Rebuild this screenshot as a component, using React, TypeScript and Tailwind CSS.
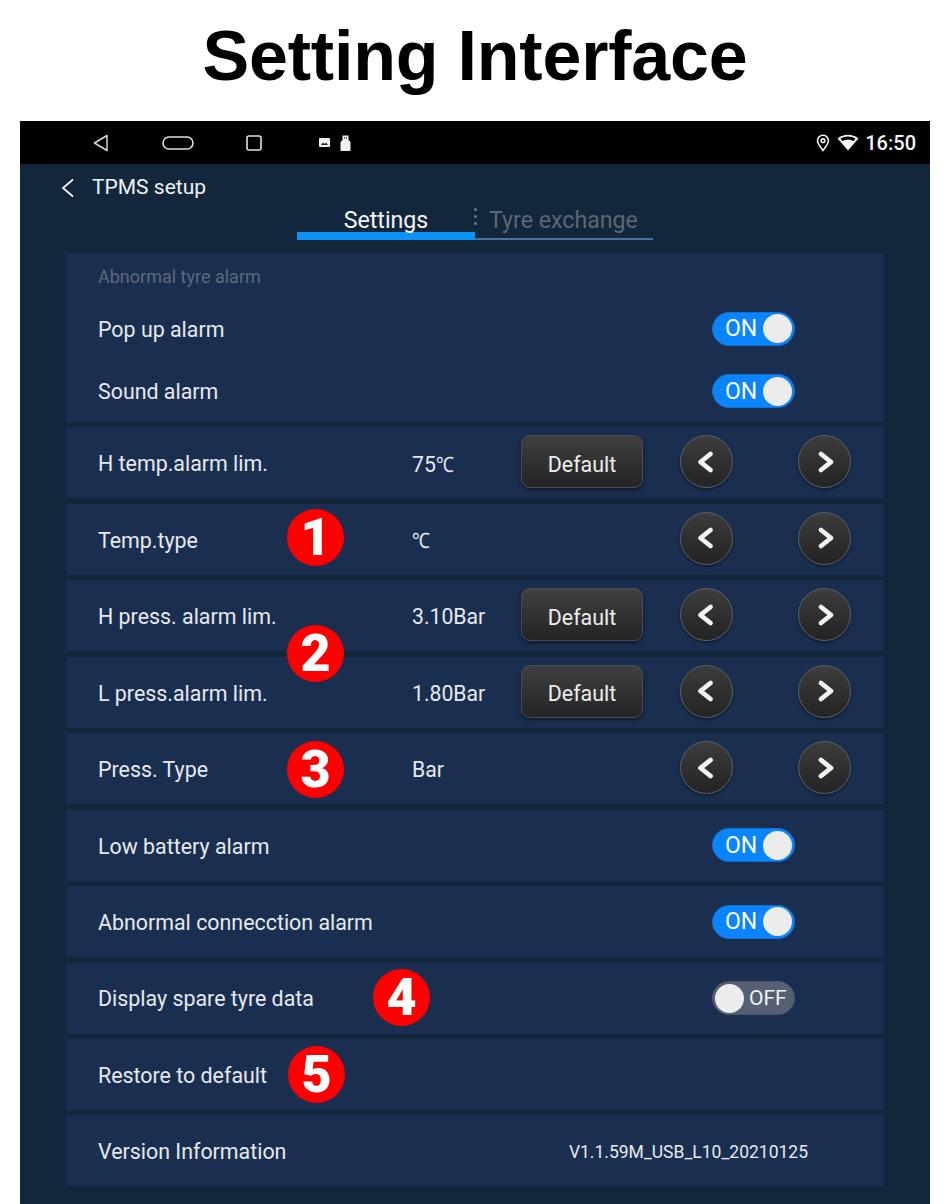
import React from "react";

const roboto = "font-['Roboto',sans-serif]";

function Toggle({ on = true }: { on?: boolean }) {
  if (!on) {
    return (
      <div className="ml-auto mr-[89px] -mt-[3px] flex h-[34px] w-[83px] shrink-0 items-center rounded-full border border-[#4a5468] bg-[#566072] pl-[2px]">
        <div className="h-[29px] w-[29px] rounded-full bg-[#ececec]" />
        <span className="ml-[5px] text-[21px] leading-none text-[#eef1f4]">OFF</span>
      </div>
    );
  }
  return (
    <div className="ml-auto mr-[89px] -mt-[3px] flex h-[34px] w-[83px] shrink-0 items-center rounded-full border border-[#1170c8] bg-[#0a84ff] pl-[12px] pr-[2px]">
      <span className="text-[23px] leading-none text-white">ON</span>
      <div className="ml-auto h-[29px] w-[29px] rounded-full bg-[#ececec]" />
    </div>
  );
}

function Arrow({ dir }: { dir: "left" | "right" }) {
  return (
    <button className="flex h-[53px] w-[53px] shrink-0 items-center justify-center rounded-full border border-[#5d6167] bg-gradient-to-b from-[#3d3d3d] to-[#232323] shadow-[0_2px_3px_rgba(0,0,0,0.4)]">
      <svg width="20" height="24" viewBox="0 0 20 24" fill="none" stroke="#f2f2f2" strokeWidth="4.8" strokeLinecap="round" strokeLinejoin="round">
        {dir === "left" ? <path d="M13.5 4 L3.5 12 L13.5 20" /> : <path d="M6 4 L16 12 L6 20" />}
      </svg>
    </button>
  );
}

function Stepper() {
  return (
    <div className="-mt-[5px] flex items-center">
      <div className="w-[37px]" />
      <Arrow dir="left" />
      <div className="w-[65px]" />
      <Arrow dir="right" />
    </div>
  );
}

function DefaultButton() {
  return (
    <button className="-mt-[5px] flex h-[53px] w-[122px] shrink-0 items-center justify-center rounded-[9px] border border-[#4a4c4f] bg-gradient-to-b from-[#404040] to-[#242424] pt-[5px] text-[21.4px] leading-none text-[#eeeeee] shadow-[0_2px_4px_rgba(0,0,0,0.5)]">
      Default
    </button>
  );
}

function Row({ children }: { children: React.ReactNode }) {
  return (
    <div className="flex h-[71px] items-center bg-[#1a2f50] pl-[32px] pt-[3px] text-[21.4px] text-[#e6e9ed]">{children}</div>
  );
}

function ValueRow({ label, value, hasDefault }: { label: string; value: React.ReactNode; hasDefault?: boolean }) {
  return (
    <Row>
      <span className="w-[314px] shrink-0">{label}</span>
      <span className="w-[109px] shrink-0 text-[21.2px]">{value}</span>
      {hasDefault ? <DefaultButton /> : <div className="w-[122px] shrink-0" />}
      <Stepper />
    </Row>
  );
}

function Celsius() {
  return <span className="inline-block origin-left scale-x-[0.85]">℃</span>;
}

function Badge({ n, className }: { n: string; className: string }) {
  return (
    <div className={`absolute flex h-[57px] w-[57px] items-center justify-center rounded-full bg-[#fe0000] text-[52px] leading-none font-black text-white ${className}`}>
      {n}
    </div>
  );
}

export default function App() {
  return (
    <div className={`relative h-[1204px] w-[950px] overflow-hidden bg-white ${roboto}`}>
      <div className="flex h-[121px] items-start justify-center pt-[16px]">
        <h1 className="font-['Liberation_Sans',sans-serif] text-[70px] leading-[80px] font-bold tracking-[-0.2px] text-black">Setting Interface</h1>
      </div>

      <div className="mx-[20px] h-[1083px] bg-[#12263c]">
        {/* Status bar */}
        <div className="flex h-[43px] items-center bg-black pl-[73px] pr-[14px] text-white">
          <svg width="16" height="18" viewBox="0 0 16 18" fill="none" stroke="#d8d8d8" strokeWidth="1.5" strokeLinejoin="round">
            <path d="M14 1.5 L1.5 9 L14 16.5 Z" />
          </svg>
          <svg className="ml-[53px]" width="32" height="14" viewBox="0 0 32 14" fill="none" stroke="#e0e0e0" strokeWidth="1.6">
            <rect x="1" y="1" width="30" height="12" rx="6" />
          </svg>
          <svg className="ml-[52px]" width="16" height="16" viewBox="0 0 16 16" fill="none" stroke="#e0e0e0" strokeWidth="1.6">
            <rect x="1" y="1" width="14" height="14" rx="2" />
          </svg>
          <svg className="ml-[57px]" width="11" height="9" viewBox="0 0 11 9">
            <rect width="11" height="9" rx="1" fill="#eeeeee" />
            <path d="M2 7 L4 4.5 L5.5 6 L7 4.5 L9 7 Z" fill="#222222" />
          </svg>
          <svg className="ml-[10px]" width="11" height="16" viewBox="0 0 11 16">
            <path d="M2.5 0.5 H8.5 V5 L10.5 7 V15 a1 1 0 0 1 -1 1 H1.5 a1 1 0 0 1 -1 -1 V7 L2.5 5 Z" fill="#f0f0f0" />
            <rect x="4" y="2" width="1" height="1.5" fill="#333333" />
            <rect x="6" y="2" width="1" height="1.5" fill="#333333" />
          </svg>
          <svg className="ml-auto" width="14" height="18" viewBox="0 0 14 18" fill="none" stroke="#f2f2f2" strokeWidth="1.6">
            <path d="M7 16.5 C4 12.5 1.5 9.5 1.5 6.7 a5.5 5.5 0 0 1 11 0 C12.5 9.5 10 12.5 7 16.5 Z" />
            <circle cx="7" cy="6.7" r="1.8" />
          </svg>
          <svg className="ml-[7px]" width="22" height="17" viewBox="0 0 22 17">
            <path d="M11 16.5 L0.5 4.5 C6.5 -0.5 15.5 -0.5 21.5 4.5 Z" fill="#f5f5f5" />
            <path d="M3.5 4.8 C8 1.8 14 1.8 18.5 4.8 L16.5 7 C13 5 9 5 5.5 7 Z" fill="#000000" />
          </svg>
          <span className="ml-[6px] text-[20px] leading-none font-medium text-[#f5f5f5]">16:50</span>
        </div>

        {/* Title */}
        <div className="flex h-[46px] items-center pl-[41px] pt-[2px] text-[21px] text-[#f0f2f4]">
          <svg width="13" height="20" viewBox="0 0 13 20" fill="none" stroke="#f0f2f4" strokeWidth="1.8">
            <path d="M12 1.5 L2 10 L12 18.5" />
          </svg>
          <span className="ml-[18px]">TPMS setup</span>
        </div>

        {/* Tabs */}
        <div className="-mt-[4px] flex justify-center">
          <div className="flex h-[34px] w-[178px] justify-center border-b-[8px] border-[#0a93f5] text-[23.2px] leading-[28px] text-[#f4f6f8]">
            <span>Settings</span>
          </div>
          <div className="relative flex h-[34px] w-[178px] items-start border-b-2 border-[#48729a] pl-[14px] text-[23.2px] leading-[28px] text-[#5a6776]">
            <span className="absolute left-[-1px] top-[2px] flex flex-col gap-[4px]">
              <i className="h-[3px] w-[3px] rounded-full bg-[#5e7f9c]" />
              <i className="h-[3px] w-[3px] rounded-full bg-[#5e7f9c]" />
              <i className="h-[3px] w-[3px] rounded-full bg-[#5e7f9c]" />
            </span>
            <span>Tyre exchange</span>
          </div>
        </div>

        {/* List */}
        <div className="mx-[46px] mt-[13px] flex flex-col gap-[5.45px]">
          <div className="h-[169px] bg-[#1a2f50] text-[21.4px] text-[#e6e9ed]">
            <div className="flex h-[46px] items-center pl-[32px] text-[18px] text-[#5c6a7b]">Abnormal tyre alarm</div>
            <div className="flex h-[62px] items-center pl-[32px]">
              <span>Pop up alarm</span>
              <Toggle />
            </div>
            <div className="flex h-[61px] items-center pl-[32px] pt-[2px]">
              <span>Sound alarm</span>
              <Toggle />
            </div>
          </div>
          <ValueRow label="H temp.alarm lim." value={<>75<Celsius /></>} hasDefault />
          <ValueRow label="Temp.type" value={<Celsius />} />
          <ValueRow label="H press. alarm lim." value="3.10Bar" hasDefault />
          <ValueRow label="L press.alarm lim." value="1.80Bar" hasDefault />
          <ValueRow label="Press. Type" value="Bar" />
          <Row>
            <span>Low battery alarm</span>
            <Toggle />
          </Row>
          <Row>
            <span>Abnormal connecction alarm</span>
            <Toggle />
          </Row>
          <Row>
            <span>Display spare tyre data</span>
            <Toggle on={false} />
          </Row>
          <Row>
            <span>Restore to default</span>
          </Row>
          <Row>
            <span>Version Information</span>
            <span className="ml-auto mr-[76px] text-[17.5px]">V1.1.59M_USB_L10_20210125</span>
          </Row>
        </div>
      </div>

      <Badge n="1" className="left-[287px] top-[509px]" />
      <Badge n="2" className="left-[287px] top-[625px]" />
      <Badge n="3" className="left-[287px] top-[741px]" />
      <Badge n="4" className="left-[373px] top-[969px]" />
      <Badge n="5" className="left-[288px] top-[1046px]" />
    </div>
  );
}
